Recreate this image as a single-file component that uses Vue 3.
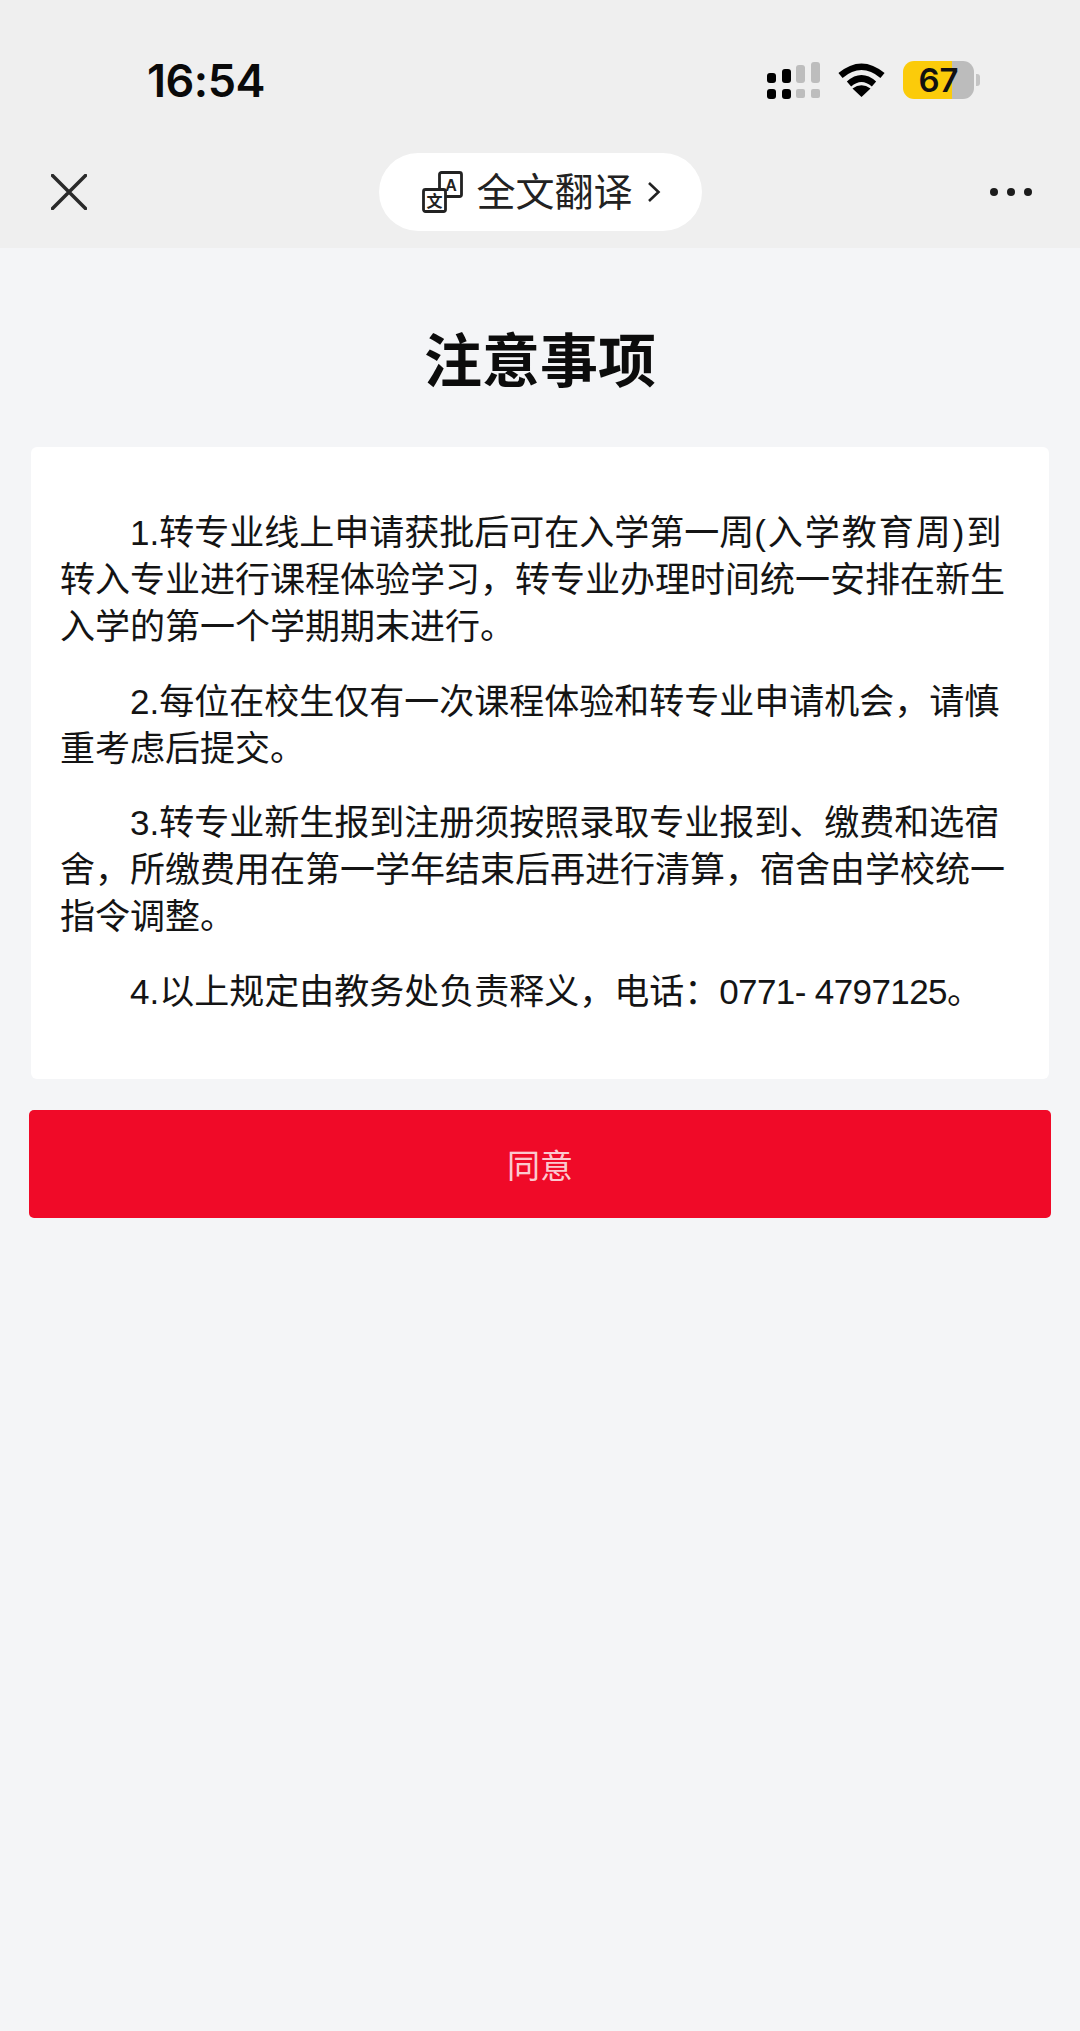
<template>
  <div class="page">
    <header class="top">
      <div class="status-bar">
        <span class="time">16:54</span>
        <div class="status-icons">
          <svg class="signal" width="53" height="38" viewBox="0 0 53 38">
            <rect x="0" y="12" width="9" height="10" rx="3" fill="#000" />
            <rect x="15" y="8" width="9" height="14" rx="3" fill="#000" />
            <rect x="29" y="4" width="9" height="18" rx="3" fill="#bdbdbd" />
            <rect x="44" y="1" width="9" height="21" rx="3" fill="#bdbdbd" />
            <rect x="0" y="28" width="9" height="10" rx="3" fill="#000" />
            <rect x="15" y="28" width="9" height="10" rx="3" fill="#000" />
            <rect x="29" y="28" width="9" height="9" rx="2" fill="#bdbdbd" />
            <rect x="44" y="28" width="9" height="9" rx="2" fill="#bdbdbd" />
          </svg>
          <svg class="wifi" width="47" height="34" viewBox="0 0 47 34">
            <path d="M2.5 12.5 Q23.5 -5 44.5 12.5" fill="none" stroke="#000" stroke-width="6.5" />
            <path d="M11 21 Q23.5 10 36 21" fill="none" stroke="#000" stroke-width="6.5" />
            <path d="M23.5 34 L14.5 25.5 Q23.5 19 32.5 25.5 Z" fill="#000" />
          </svg>
          <div class="battery">
            <span class="battery-body">67</span>
            <span class="battery-nub"></span>
          </div>
        </div>
      </div>
      <nav class="nav-bar">
        <button class="icon-btn" type="button">
          <svg width="36" height="36" viewBox="0 0 36 36">
            <path d="M1.5 1.5 L34.5 34.5 M34.5 1.5 L1.5 34.5" fill="none" stroke="#2a2a2a" stroke-width="3.5" stroke-linecap="round" />
          </svg>
        </button>
        <div class="translate-pill">
          <svg class="translate-icon" width="42" height="42" viewBox="0 0 42 42">
            <rect x="17.5" y="1.5" width="22" height="24" rx="2" fill="#fff" stroke="#222" stroke-width="2.8" />
            <text x="29" y="19.5" class="icon-letter">A</text>
            <rect x="1.5" y="18.5" width="22" height="22" rx="2" fill="#fff" stroke="#222" stroke-width="2.8" />
            <text x="12.5" y="35.5" class="icon-letter">文</text>
          </svg>
          <span class="translate-text">全文翻译</span>
          <svg width="14" height="22" viewBox="0 0 14 22">
            <path d="M2 2 L11.5 11 L2 20" fill="none" stroke="#222" stroke-width="2.6" />
          </svg>
        </div>
        <div class="more-dots">
          <i></i><i></i><i></i>
        </div>
      </nav>
    </header>

    <h1 class="title">注意事项</h1>

    <section class="card">
      <p>1.转专业线上申请获批后可在入学第一周<span class="wide">(入学教育周)</span>到转入专业进行课程体验学习，转专业办理时间统一安排在新生入学的第一个学期期末进行。</p>
      <p>2.每位在校生仅有一次课程体验和转专业申请机会，请慎重考虑后提交。</p>
      <p>3.转专业新生报到注册须按照录取专业报到、缴费和选宿舍，所缴费用在第一学年结束后再进行清算，宿舍由学校统一指令调整。</p>
      <p>4.以上规定由教务处负责释义，电话：<span class="phone">0771- 4797125</span>。</p>
    </section>

    <button class="btn-agree" type="button">同意</button>
  </div>
</template>

<script setup>
</script>

<style>
html,
body {
  margin: 0;
  background: #f4f5f7;
}
</style>

<style scoped>
.page {
  min-height: 2031px;
  background: #f4f5f7;
  font-family: "Liberation Sans", "Noto Sans CJK SC", sans-serif;
  color: #111;
}

.top {
  height: 248px;
  background: #efefef;
  box-sizing: border-box;
  padding-top: 56px;
}

.status-bar {
  display: flex;
  justify-content: space-between;
  align-items: center;
  height: 48px;
  padding: 0 100px 0 147px;
}
.time {
  font-family: Inter, sans-serif;
  font-size: 45px;
  font-weight: 600;
  letter-spacing: -0.5px;
  color: #0a0a0a;
}
.status-icons {
  display: flex;
  align-items: center;
  gap: 18px;
}
.battery {
  display: flex;
  align-items: center;
  gap: 2px;
}
.battery-body {
  width: 71px;
  height: 38px;
  border-radius: 11px;
  background: linear-gradient(90deg, #fbcb0a 69%, #bcbcbc 69%);
  font-family: Inter, sans-serif;
  font-size: 33px;
  font-weight: 600;
  line-height: 38px;
  text-align: center;
  color: #111;
}
.battery-nub {
  width: 4px;
  height: 12px;
  border-radius: 0 3px 3px 0;
  background: #c4c4c4;
}

.nav-bar {
  display: flex;
  align-items: center;
  justify-content: space-between;
  height: 78px;
  margin-top: 49px;
  padding: 0 48px 0 51px;
}
.icon-btn {
  display: flex;
  padding: 0;
  border: none;
  background: none;
}
.translate-pill {
  display: flex;
  align-items: center;
  box-sizing: border-box;
  width: 323px;
  height: 78px;
  padding-left: 43px;
  margin-left: 3px;
  border-radius: 39px;
  background: #fff;
}
.translate-text {
  margin: 0 14px 0 13px;
  font-size: 39px;
  line-height: 1;
  color: #222;
}
.icon-letter {
  font-size: 16px;
  font-weight: 700;
  text-anchor: middle;
  fill: #222;
}
.more-dots {
  display: flex;
  gap: 9px;
}
.more-dots i {
  width: 8px;
  height: 8px;
  border-radius: 50%;
  background: #1c1c1c;
}

.title {
  margin: 76px 0 47px;
  font-size: 58px;
  font-weight: 700;
  line-height: 76px;
  text-align: center;
  color: #0c0c0c;
}

.card {
  box-sizing: border-box;
  margin: 0 31px;
  padding: 62px 42px 64px 29px;
  border-radius: 6px;
  background: #fff;
}
.card p {
  margin: 0 0 27.5px;
  font-size: 35px;
  line-height: 47px;
  text-indent: 2em;
  color: #141414;
}
.card p:last-child {
  margin-bottom: 0;
}
.wide {
  display: inline-block;
  text-indent: 0;
  letter-spacing: 2px;
}
.phone {
  letter-spacing: -0.6px;
}

.btn-agree {
  display: block;
  box-sizing: border-box;
  width: 1022px;
  height: 108px;
  margin: 31px 29px 0;
  padding: 0;
  border: none;
  border-radius: 5px;
  background: #f00a28;
  font-family: inherit;
  font-size: 33px;
  color: rgba(255, 255, 255, 0.8);
}
</style>
